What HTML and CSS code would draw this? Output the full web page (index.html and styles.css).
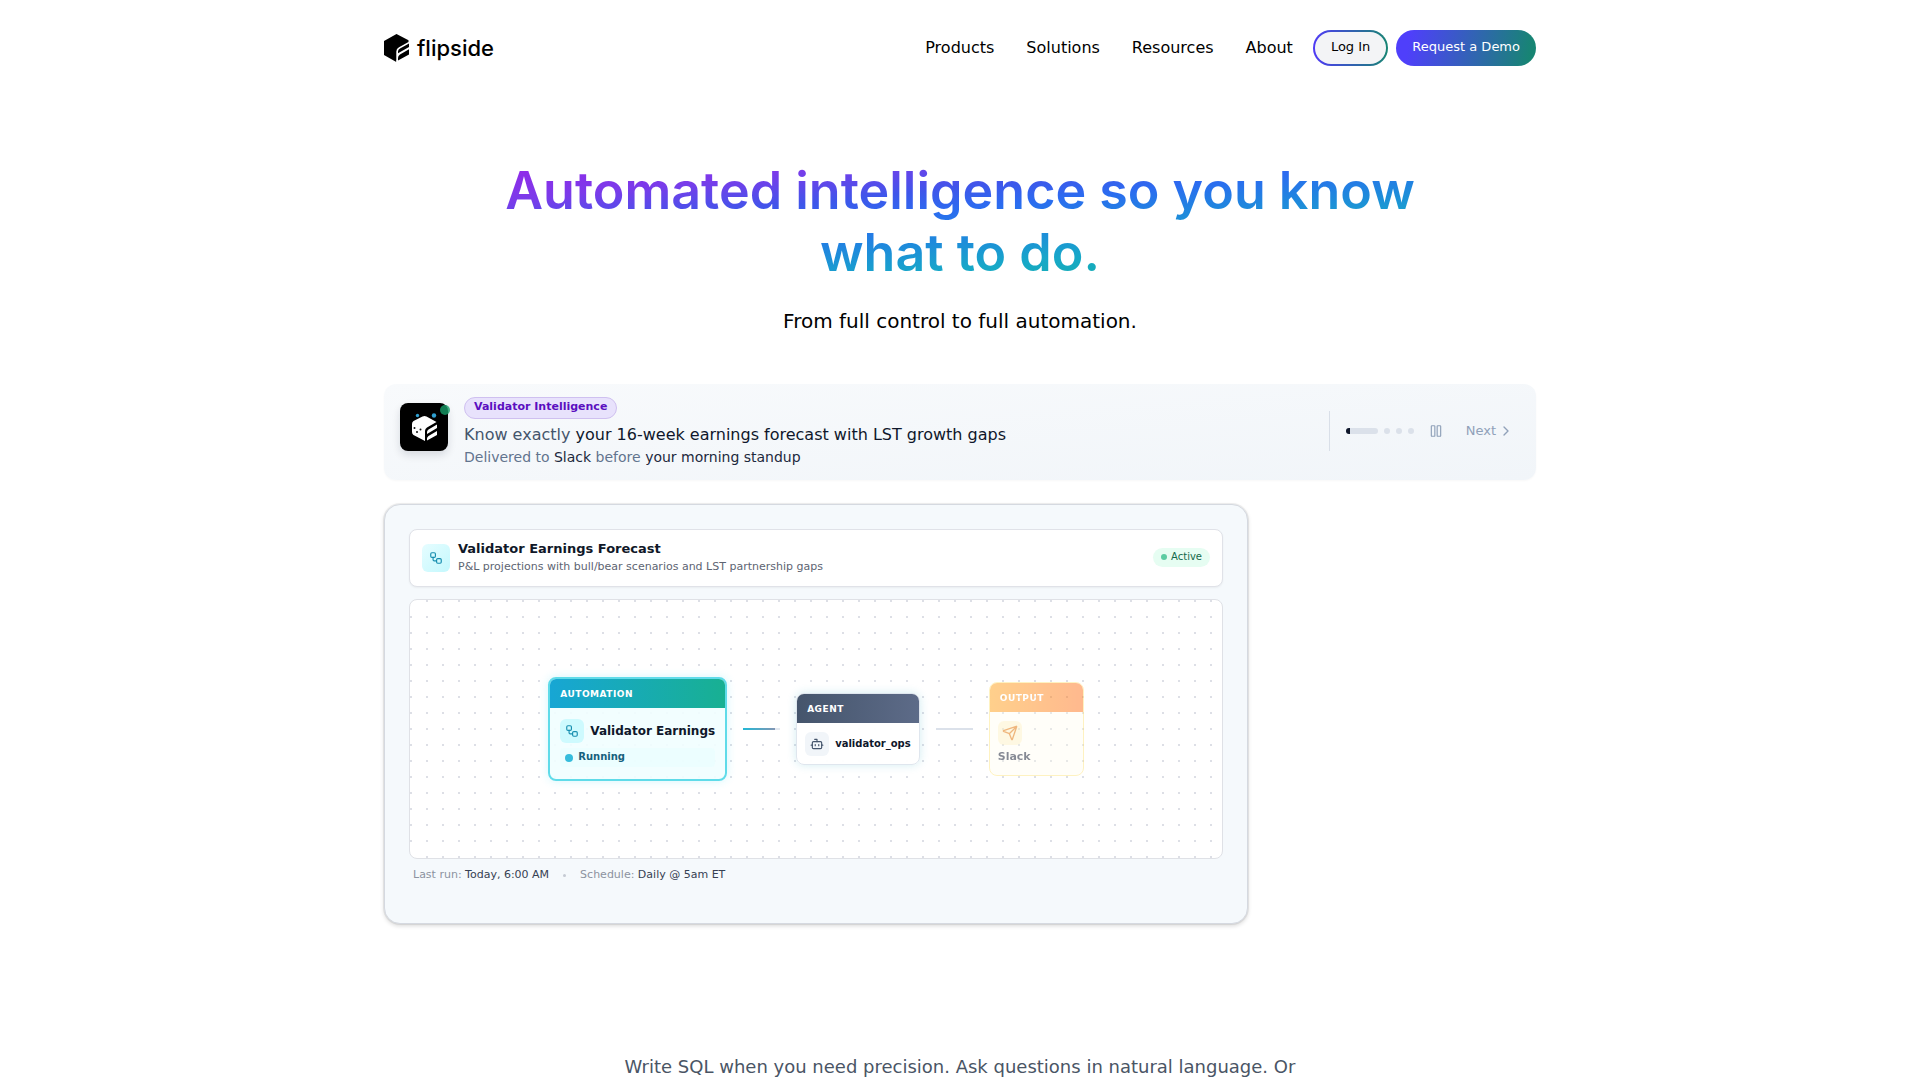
FILE: index.html
```html
<!DOCTYPE html>
<html lang="en">
<head>
<meta charset="utf-8">
<meta name="viewport" content="width=device-width, initial-scale=1">
<title>Flipside</title>
<link rel="stylesheet" href="styles.css">
</head>
<body>
<svg class="sprite" aria-hidden="true">
  <symbol id="workflow" viewBox="0 0 24 24"><rect width="8" height="8" x="3" y="3" rx="2"/><path d="M7 11v4a2 2 0 0 0 2 2h4"/><rect width="8" height="8" x="13" y="13" rx="2"/></symbol>
</svg>
<div class="container">
  <header class="site-header">
    <a class="logo" href="#" aria-label="flipside">
      <svg class="logo-mark" viewBox="0 0 25 28" aria-hidden="true">
        <path fill="#000" d="M12.500 0 24.500 6.200V8L15 13.200Q12.300 14.800 12.300 17.500V28L0 21V7Z"/>
        <path fill="#000" d="M25 9.500V13L14 19.200V17.500Q14 15.500 16 14.400ZM25 15.200V20.500L14 26.500V24Q14 22 16 20.600Z"/>
        <path fill="none" stroke="#fff" stroke-width="1" d="M13 26.500V28"/>
      </svg>
      <span class="logo-word">flipside</span>
    </a>
    <nav class="site-nav">
      <div class="nav-links">
        <a href="#">Products</a>
        <a href="#">Solutions</a>
        <a href="#">Resources</a>
        <a href="#">About</a>
      </div>
      <div class="nav-actions">
        <a class="btn btn-outline" href="#">Log In</a>
        <a class="btn btn-primary" href="#">Request a Demo</a>
      </div>
    </nav>
  </header>

  <main>
    <section class="hero">
      <h1>Automated intelligence so you know<br>what to do.</h1>
      <p>From full control to full automation.</p>
    </section>

    <section class="banner">
      <div class="avatar">
        <svg viewBox="0 0 48 48" aria-hidden="true">
          <circle cx="17.500" cy="12.500" r="1.700" fill="#2f9fd0"/>
          <circle cx="34" cy="12.500" r="2.200" fill="#2f9fd0"/>
          <path fill="#fff" d="M22.500 13.500Q24.500 12.500 26.500 13.500L36.500 19 27 24.500Q25 25.500 25 28V38L13.500 32Q12 31 12 29V21Q12 19 13.500 18Z"/>
          <path fill="#fff" d="M37 21.500V25L27 31V29Q27 27.500 28.500 26.500ZM37 28V32L27 37.500V35.500Q27 34 28.500 33Z"/>
          <circle cx="14.500" cy="25" r="1" fill="#111"/>
          <circle cx="20.500" cy="26.500" r="1" fill="#111"/>
          <circle cx="17" cy="29" r="1" fill="#111"/>
        </svg>
        <span class="presence"></span>
      </div>
      <div class="banner-copy">
        <span class="tag">Validator Intelligence</span>
        <p class="lead">Know exactly <strong>your 16-week earnings forecast with LST growth gaps</strong></p>
        <p class="detail">Delivered to <strong>Slack</strong> before <strong>your morning standup</strong></p>
      </div>
      <div class="banner-controls">
        <div class="steps"><span class="step step-current"><span class="step-fill"></span></span><span class="step"></span><span class="step"></span><span class="step"></span></div>
        <button class="icon-btn" type="button" aria-label="Pause">
          <svg width="14" height="14" viewBox="0 0 24 24"><rect x="14" y="3" width="6" height="18" rx="1"/><rect x="4" y="3" width="6" height="18" rx="1"/></svg>
        </button>
        <button class="next-btn" type="button">Next
          <svg width="16" height="16" viewBox="0 0 24 24"><path d="m9 18 6-6-6-6"/></svg>
        </button>
      </div>
    </section>

    <section class="panel">
      <div class="panel-head">
        <span class="chip chip-large"><svg width="14" height="14"><use href="#workflow"/></svg></span>
        <div class="panel-title">
          <h2>Validator Earnings Forecast</h2>
          <p>P&amp;L projections with bull/bear scenarios and LST partnership gaps</p>
        </div>
        <span class="status"><i class="dot"></i>Active</span>
      </div>
      <div class="canvas">
        <article class="node node-automation">
          <div class="node-head">AUTOMATION</div>
          <div class="node-body">
            <div class="node-row">
              <span class="chip"><svg width="14" height="14"><use href="#workflow"/></svg></span>
              <span class="node-name">Validator Earnings</span>
            </div>
            <div class="running"><i class="dot"></i>Running</div>
          </div>
        </article>
        <span class="link link-active"></span>
        <article class="node node-agent">
          <div class="node-head">AGENT</div>
          <div class="node-body node-row">
            <span class="chip"><svg width="14" height="14" viewBox="0 0 24 24"><path d="M12 8V4H8"/><rect width="16" height="12" x="4" y="8" rx="2"/><path d="M2 14h2M20 14h2M15 13v2M9 13v2"/></svg></span>
            <span class="node-name">validator_ops</span>
          </div>
        </article>
        <span class="link"></span>
        <article class="node node-output">
          <div class="node-head">OUTPUT</div>
          <div class="node-body">
            <span class="chip"><svg width="16" height="16" viewBox="0 0 24 24"><path d="M14.536 21.686a.5.5 0 0 0 .937-.024l6.500-19a.496.496 0 0 0-.635-.635l-19 6.500a.5.5 0 0 0-.024.937l7.930 3.180a2 2 0 0 1 1.112 1.110zM21.854 2.147l-10.940 10.939"/></svg></span>
            <span class="node-name">Slack</span>
          </div>
        </article>
      </div>
      <footer class="panel-foot">
        <span>Last run: <b>Today, 6:00 AM</b></span>
        <i class="separator"></i>
        <span>Schedule: <b>Daily @ 5am ET</b></span>
      </footer>
    </section>

    <p class="closing">Write SQL when you need precision. Ask questions in natural language. Or</p>
  </main>
</div>
</body>
</html>
```
FILE: styles.css
```css
* { box-sizing: border-box; }
body {
  margin: 0;
  background: #fff;
  color: #000;
  font-family: "DejaVu Sans", sans-serif;
  font-size: 16px;
  line-height: 24px;
}
h1, h2, p { margin: 0; }
a { color: inherit; text-decoration: none; }
button { border: 0; padding: 0; background: none; color: inherit; font: inherit; cursor: pointer; }
svg { display: block; fill: none; stroke: currentColor; stroke-width: 2; stroke-linecap: round; stroke-linejoin: round; }
.sprite { position: absolute; width: 0; height: 0; }
.container { max-width: 1184px; margin: 0 auto; padding: 0 16px; }

.site-header { display: flex; align-items: center; justify-content: space-between; padding: 30px 0; }
.logo { display: flex; align-items: center; gap: 8px; }
.logo-mark { width: 25px; height: 28px; stroke: none; }
.logo-word { font-family: Inter, sans-serif; font-size: 22px; font-weight: 500; line-height: 28px; }
.site-nav { display: flex; align-items: center; gap: 20px; }
.nav-links { display: flex; gap: 32px; }
.nav-actions { display: flex; gap: 8px; }
.btn { border: 2px solid transparent; border-radius: 18px; padding: 5px 16px 7px; font-size: 13px; line-height: 20px; }
.btn-outline {
  background: linear-gradient(#f3f4f6, #f3f4f6) padding-box, linear-gradient(90deg, #4f39f6, #178573) border-box;
}
.btn-primary { padding: 5px 14px 7px; color: #fff; background: linear-gradient(100deg, #4f3ffb 10%, #178573 95%) border-box; }

.hero { padding: 64px 0 47px; text-align: center; }
.hero h1 {
  font-family: Inter, sans-serif;
  font-size: 52px;
  font-weight: 600;
  line-height: 62px;
  background: linear-gradient(to bottom right, #a21ce8, #7b3bea 22%, #3f56ea 36%, #2b6cf0 45%, #1f88dd 56%, #17a8c8 69%, #10b981);
  background-clip: text;
  -webkit-background-clip: text;
  color: transparent;
}
.hero p { margin-top: 21px; font-size: 20px; line-height: 32px; }

.banner {
  display: flex;
  align-items: center;
  gap: 16px;
  min-height: 96px;
  padding: 8px 22px 8px 16px;
  border-radius: 12px;
  background: linear-gradient(to bottom right, #f8fafc, #f1f5f9);
  box-shadow: 0 1px 2px #0f172a08;
}
.avatar { position: relative; width: 48px; height: 48px; margin-bottom: 10px; border-radius: 8px; background: #000; box-shadow: 0 4px 8px #0f172a22; }
.avatar svg { width: 48px; height: 48px; stroke: none; }
.presence { position: absolute; top: 2px; right: -2px; width: 10px; height: 10px; border-radius: 50%; background: #169c68cc; }
.banner-copy { flex: 1; }
.tag {
  display: inline-block;
  padding: 1px 9px 3px;
  border: 1px solid #cfc0f0;
  border-radius: 12px;
  background: #e8e2fc;
  color: #5b0fc0;
  font-size: 11px;
  font-weight: 700;
  line-height: 16px;
  vertical-align: top;
}
.lead { margin-top: 2px; color: #45556c; }
.lead strong { color: #0f172b; font-weight: 400; }
.detail { color: #62748e; font-size: 14px; line-height: 21px; }
.detail strong { color: #1d293d; font-weight: 400; }
.banner-controls { display: flex; align-items: center; height: 40px; margin-bottom: 2px; padding-left: 16px; border-left: 1px solid #d9dfe8; color: #90a1b9; font-size: 13px; }
.steps { display: flex; gap: 6px; }
.step { width: 6px; height: 6px; border-radius: 3px; background: #dbe1ea; overflow: hidden; }
.step-current { width: 32px; }
.step-fill { display: block; width: 4px; height: 6px; background: #0f172b; }
.icon-btn { margin-left: 15px; }
.next-btn { display: flex; align-items: center; gap: 2px; margin-left: 23px; }

.panel {
  width: 75%;
  min-height: 420px;
  margin-top: 24px;
  padding: 24px;
  border: 1px solid #d5d9e0;
  border-radius: 16px;
  background: #f5f9fc;
  box-shadow: 0 0 0 1px #0000000f, 0 2px 4px #00000026;
}
.panel-head {
  display: flex;
  align-items: center;
  gap: 8px;
  min-height: 58px;
  padding: 8px 12px;
  border: 1px solid #e0e2e8;
  border-radius: 8px;
  background: #fff;
  box-shadow: 0 1px 2px #0000000d;
}
.chip { display: flex; align-items: center; justify-content: center; flex: none; width: 24px; height: 24px; border-radius: 6px; background: #cefafe; color: #178fb0; }
.chip-large { width: 28px; height: 28px; background: linear-gradient(to bottom right, #e6fdff, #c4f8fd); }
.panel-title { flex: 1; padding-bottom: 2px; }
.panel-title h2 { color: #101828; font-size: 13px; line-height: 18px; }
.panel-title p { color: #5d6472; font-size: 11px; line-height: 17px; }
.status { display: flex; align-items: center; gap: 4px; margin-bottom: 2px; padding: 1px 8px 3px; border-radius: 10px; background: #e6fdf2; color: #13694b; font-size: 10px; line-height: 15px; }
.dot { width: 6px; height: 6px; margin-top: 2px; border-radius: 50%; background: #5ccca2; }
.canvas {
  display: flex;
  align-items: center;
  justify-content: center;
  gap: 16px;
  min-height: 260px;
  margin-top: 12px;
  border: 1px solid #dfe1e6;
  border-radius: 8px;
  background: #fff radial-gradient(circle at 1px 1px, #dddfe6 1px, transparent 0) 0 0 / 16px 16px;
}
.node { border: 1px solid #dfe6ee; border-radius: 8px; overflow: hidden; }
.node-head { padding: 8px 10px 6px; color: #fff; font-size: 9px; font-weight: 700; line-height: 15px; letter-spacing: 0.5px; }
.node-row { display: flex; align-items: center; gap: 6px; }
.node-name { color: #0f172b; font-weight: 700; line-height: 16px; }
.node-automation { border: 2px solid #5fdbe9; background: #f1feffe6; box-shadow: 0 0 10px #22d3ee33; }
.node-automation .node-head { background: linear-gradient(90deg, #17a6d4, #18b092); }
.node-automation .node-body { padding: 11px 10px 12px; }
.node-automation .node-name { font-size: 12px; }
.running { display: flex; align-items: center; gap: 5px; margin-top: 5px; padding: 1px 5px 3px; border-radius: 4px; background: #e8fdffaa; color: #16607d; font-size: 10px; font-weight: 700; line-height: 15px; }
.running .dot { width: 8px; height: 8px; background: #35bcdc; }
.node-agent { background: #fffffff2; box-shadow: 0 0 10px #22a3be33; }
.node-agent .node-head { background: linear-gradient(90deg, #45556c, #5d6b88); }
.node-agent .node-body { padding: 9px 8px 8px; }
.node-agent .chip { background: #f1f5f9; color: #45556c; }
.node-agent .node-name { font-size: 10px; }
.node-output { min-width: 95px; border-color: #fee685; background: #fffbeb99; opacity: 0.5; }
.node-output .node-head { background: linear-gradient(90deg, #ff9a0aee, #ff6a0fee); }
.node-output .node-body { padding: 9px 8px 10px; }
.node-output .chip { background: #fef3c6; color: #e17100; }
.node-output .node-name { display: block; margin-top: 4px; font-size: 11px; }
.link { width: 37px; height: 2px; background: #dbe1ea; }
.link-active { background: linear-gradient(90deg, #22b8d6, #8296b4 32px, #e2e8f0 32px); }
.panel-foot { display: flex; align-items: center; gap: 14px; padding: 8px 4px 7px; color: #8c93a0; font-size: 11px; line-height: 16px; }
.panel-foot b { color: #364153; font-weight: 400; }
.separator { width: 3px; height: 3px; border-radius: 50%; background: #c5cad3; }

.closing { max-width: 672px; margin: 130px auto 0; color: #4a5565; font-size: 18px; line-height: 26px; text-align: center; }
```
